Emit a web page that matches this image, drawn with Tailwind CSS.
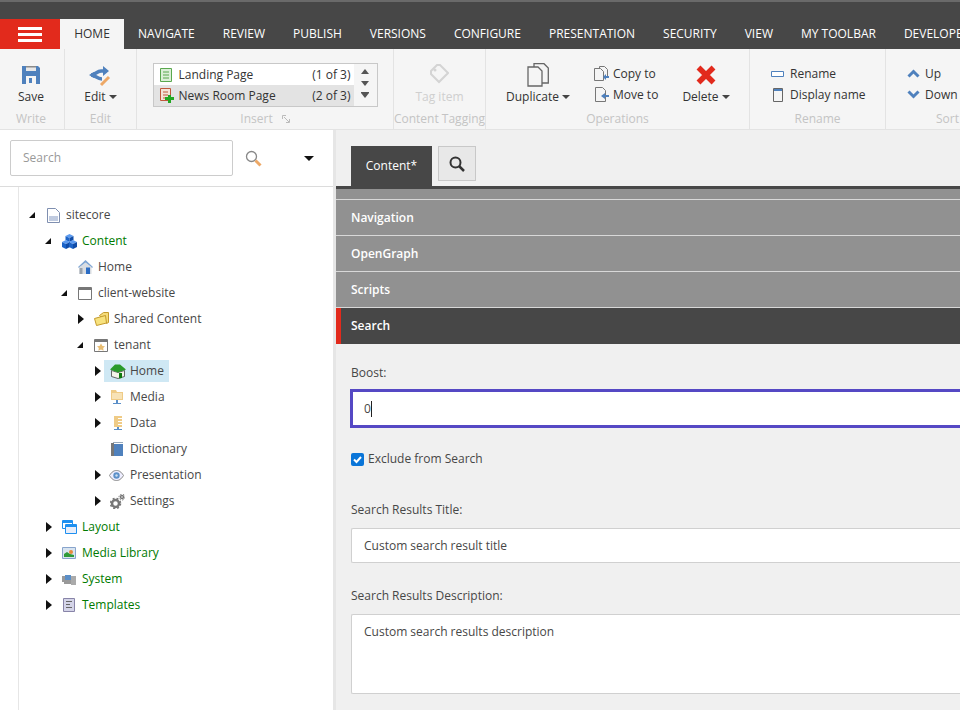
<!DOCTYPE html>
<html lang="en">
<head>
<meta charset="UTF-8">
<title>Content Editor</title>
<script src="https://cdn.jsdelivr.net/npm/@tailwindcss/browser@4"></script>
</head>
<body class="w-[960px] h-[710px] overflow-hidden bg-white font-['Open_Sans',sans-serif] text-[12px] text-[#333]">

<!-- top bar with tabs -->
<div class="h-[49px] bg-[#474747] border-t-2 border-[#6a6a6a] flex flex-col justify-end overflow-hidden">
  <div class="h-[30px] flex items-stretch whitespace-nowrap text-white">
    <div class="w-[60px] shrink-0 bg-[#e22a1c] flex flex-col items-center justify-center gap-[3px]">
      <span class="block w-[24px] h-[3px] bg-white"></span>
      <span class="block w-[24px] h-[3px] bg-white"></span>
      <span class="block w-[24px] h-[3px] bg-white"></span>
    </div>
    <div class="w-[64px] shrink-0 bg-[#f5f5f5] text-[#333] flex items-center justify-center">HOME</div>
    <div class="flex items-center pl-[14px] gap-[28px]">
      <span>NAVIGATE</span><span>REVIEW</span><span>PUBLISH</span><span>VERSIONS</span><span>CONFIGURE</span><span>PRESENTATION</span><span>SECURITY</span><span>VIEW</span><span>MY TOOLBAR</span><span>DEVELOPER</span>
    </div>
  </div>
</div>

<!-- ribbon -->
<div class="h-[81px] bg-[#f5f5f5] border-b border-[#e3e3e3] flex whitespace-nowrap">
  <div class="w-[65px] shrink-0 border-r border-[#e3e3e3] pr-[2px] flex flex-col items-center">
    <div class="h-[61px] flex flex-col items-center">
      <svg class="mt-[17px]" width="18" height="18" viewBox="0 0 18 18"><path fill="#4f81bd" d="M0 0h16l2 2v16H0z"/><path fill="#e8e8e8" d="M4 0h10v5H4z"/><path fill="#8a8a8a" d="M4 0h10v1.500H4z"/><path fill="#f5f5f5" d="M4 10h10v8H4z"/><path fill="#4f81bd" d="M7 12h3v5H7z"/></svg>
      <div class="mt-[4px] h-[18px] leading-[18px]">Save</div>
    </div>
    <div class="text-[#c4c4c4]">Write</div>
  </div>
  <div class="w-[72px] shrink-0 border-r border-[#e3e3e3] flex flex-col items-center">
    <div class="h-[61px] flex flex-col items-center">
      <svg class="mt-[17px]" width="22" height="21" viewBox="0 0 22 21"><path fill="none" stroke="#4f81bd" stroke-width="3.500" d="M2 9c4 0 6-4 10-4h5M2 9c4 0 6 4 11 4"/><path fill="#4f81bd" d="M14 0l6 5-6 5zM0 9l5-3v6z"/><path fill="none" stroke="#eda866" stroke-width="3" d="M12 19l8-8"/></svg>
      <div class="mt-[1px] h-[18px] leading-[18px] flex items-center gap-[3px]">Edit<span class="w-0 h-0 border-x-[4px] border-x-transparent border-t-[4px] border-t-[#444]"></span></div>
    </div>
    <div class="text-[#c4c4c4]">Edit</div>
  </div>
  <div class="w-[257px] shrink-0 border-r border-[#e3e3e3] flex flex-col items-center">
    <div class="h-[61px]">
      <div class="mt-[14px] w-[225px] h-[44px] border border-[#c8c8c8] bg-[#f5f5f5] flex">
        <div class="w-[200px]">
          <div class="h-[21px] bg-white flex items-center pl-[6px] pr-[3px]">
            <svg width="12" height="14" viewBox="0 0 12 14"><path fill="#dcefd8" stroke="#5aa84f" d="M.5.500h11v13H.5z"/><path stroke="#5aa84f" d="M3 4h6M3 7h6M3 10h6"/></svg>
            <span class="ml-[7px] grow">Landing Page</span><span>(1 of 3)</span>
          </div>
          <div class="h-[21px] bg-[#e3e3e3] flex items-center pl-[6px] pr-[3px]">
            <svg width="14" height="15" viewBox="0 0 14 15" class="mr-[-2px]"><path fill="#f4e4d8" stroke="#c0583c" d="M.5.500h10v12H.5z"/><path stroke="#c0583c" d="M3 4h5M3 7h5M3 10h3"/><path fill="#22a822" d="M8 7h3v2h3v3h-3v3H8v-3H5V9h3z"/></svg>
            <span class="ml-[7px] grow">News Room Page</span><span>(2 of 3)</span>
          </div>
        </div>
        <div class="grow flex flex-col items-center pt-[5px] gap-[7px]">
          <span class="w-0 h-0 border-x-[4px] border-x-transparent border-b-[5px] border-b-[#555]"></span>
          <span class="w-0 h-0 border-x-[4px] border-x-transparent border-t-[5px] border-t-[#555]"></span>
          <span class="w-[8px] border-t border-[#555] mt-[-1px] mb-[-7px]"></span>
          <span class="w-0 h-0 border-x-[4px] border-x-transparent border-t-[5px] border-t-[#555]"></span>
        </div>
      </div>
    </div>
    <div class="text-[#c4c4c4] flex items-center gap-[9px]">Insert
      <svg width="8" height="8" viewBox="0 0 8 8"><path fill="none" stroke="#bbb" d="M.5 4V.5H4M2 2l5 5M7.500 4v3.500H4"/></svg>
    </div>
  </div>
  <div class="w-[92px] shrink-0 border-r border-[#e3e3e3] flex flex-col items-center">
    <div class="h-[61px] flex flex-col items-center">
      <svg class="mt-[15px]" width="20" height="20" viewBox="0 0 20 20"><path fill="none" stroke="#d4d4d4" stroke-width="2" d="M2 7l6-6h3l8 8-9 9-8-8z"/><circle cx="6" cy="6" r="1.500" fill="#d4d4d4"/></svg>
      <div class="mt-[4px] h-[18px] leading-[18px] text-[#cfcfcf]">Tag item</div>
    </div>
    <div class="text-[#c4c4c4]">Content Tagging</div>
  </div>
  <div class="w-[264px] shrink-0 border-r border-[#e3e3e3] flex flex-col">
    <div class="h-[61px] flex">
      <div class="w-[104px] flex flex-col items-center">
        <svg class="mt-[14px]" width="22" height="24" viewBox="0 0 22 24"><path fill="#f5f5f5" stroke="#666" stroke-width="1.300" d="M7 .7h10l4.300 4.300v15H7z"/><path fill="#f5f5f5" stroke="#666" stroke-width="1.300" d="M1 4h10l4 4v15H1z"/></svg>
        <div class="mt-[1px] h-[18px] leading-[18px] flex items-center gap-[3px]">Duplicate<span class="w-0 h-0 border-x-[4px] border-x-transparent border-t-[4px] border-t-[#444]"></span></div>
      </div>
      <div class="w-[90px] pt-[14px] pl-[4px]">
        <div class="h-[21px] flex items-center gap-[4px]">
          <svg width="15" height="15" viewBox="0 0 15 15"><path fill="#f5f5f5" stroke="#777" d="M5.500.5h5l3 3v8h-8z"/><path fill="#f5f5f5" stroke="#777" d="M.5 2.500h6l3 3v9h-9z"/><path fill="#4f81bd" d="M9 11l3-3v2h3v2h-3v2z"/></svg>
          <span>Copy to</span>
        </div>
        <div class="h-[21px] flex items-center gap-[4px]">
          <svg width="15" height="15" viewBox="0 0 15 15"><path fill="#f5f5f5" stroke="#777" d="M1.500.5h7l3 3v11h-10z"/><path fill="#4f81bd" d="M7 9l4-3v2h4v2h-4v2z"/></svg>
          <span>Move to</span>
        </div>
      </div>
      <div class="w-[52px] flex flex-col items-center">
        <svg class="mt-[16px]" width="20" height="20" viewBox="0 0 20 20"><path fill="none" stroke="#e22a1c" stroke-width="5.500" d="M2.500 2.500l15 15M17.500 2.500l-15 15"/></svg>
        <div class="mt-[3px] h-[18px] leading-[18px] flex items-center gap-[3px]">Delete<span class="w-0 h-0 border-x-[4px] border-x-transparent border-t-[4px] border-t-[#444]"></span></div>
      </div>
    </div>
    <div class="text-center text-[#c4c4c4]">Operations</div>
  </div>
  <div class="w-[136px] shrink-0 border-r border-[#e3e3e3] flex flex-col">
    <div class="h-[61px] pt-[14px] pl-[21px]">
      <div class="h-[21px] flex items-center gap-[5px]">
        <svg width="14" height="14" viewBox="0 0 14 14"><path fill="#fff" stroke="#4f81bd" d="M.5 4.500h12v5H.5z"/></svg>
        <span>Rename</span>
      </div>
      <div class="h-[21px] flex items-center gap-[5px]">
        <svg width="14" height="14" viewBox="0 0 14 14"><path fill="#f5f5f5" stroke="#666" d="M2.500.5h9v13h-9z"/><path fill="#4f81bd" d="M3 1h8v2H3z"/></svg>
        <span>Display name</span>
      </div>
    </div>
    <div class="text-center text-[#c4c4c4]">Rename</div>
  </div>
  <div class="grow flex flex-col">
    <div class="h-[61px] pt-[14px] pl-[21px]">
      <div class="h-[21px] flex items-center gap-[5px]">
        <svg width="13" height="13" viewBox="0 0 13 13"><path fill="none" stroke="#4f81bd" stroke-width="3" d="M1.500 9.500l5-5 5 5"/></svg>
        <span>Up</span>
      </div>
      <div class="h-[21px] flex items-center gap-[5px]">
        <svg width="13" height="13" viewBox="0 0 13 13"><path fill="none" stroke="#4f81bd" stroke-width="3" d="M1.500 3.500l5 5 5-5"/></svg>
        <span>Down</span>
      </div>
    </div>
    <div class="pl-[50px] text-[#c4c4c4]">Sort</div>
  </div>
</div>

<div class="flex h-[580px]">
  <!-- tree panel -->
  <div class="w-[336px] shrink-0 bg-white border-r-[3px] border-[#e6e6e6] flex flex-col">
    <div class="h-[57px] shrink-0 border-b border-[#dcdcdc] flex items-center pl-[10px]">
      <div class="w-[223px] h-[36px] border border-[#ccc] rounded-[2px] flex items-center pl-[12px] text-[#999]">Search</div>
      <svg class="ml-[12px]" width="17" height="17" viewBox="0 0 17 17"><circle cx="6.500" cy="6.500" r="5" fill="none" stroke="#888" stroke-width="1.300"/><path stroke="#eda866" stroke-width="3" d="M10.500 10.500l5 5"/></svg>
      <span class="ml-[42px] w-0 h-0 border-x-[5px] border-x-transparent border-t-[5px] border-t-[#111]"></span>
    </div>
    <div class="grow ml-[18px] border-l border-[#e6e6e6] pt-[15px] text-[#474747]">
      <div class="h-[26px] flex items-center pl-[10px]">
        <svg width="7" height="7" viewBox="0 0 7 7" class="mr-[11px]"><path d="M6 0v6H0z" fill="#111"/></svg>
        <svg width="13" height="15" viewBox="0 0 13 15"><path fill="#fff" stroke="#7f8fb0" d="M.5.500h8l4 4v10H.5z"/><path fill="#c0cbe0" d="M2 8h9v5H2z"/></svg>
        <span class="ml-[6px]">sitecore</span>
      </div>
      <div class="h-[26px] flex items-center pl-[26px] text-[#007a00]">
        <svg width="7" height="7" viewBox="0 0 7 7" class="mr-[10px]"><path d="M6 0v6H0z" fill="#111"/></svg>
        <svg width="15" height="15" viewBox="0 0 15 15"><path fill="#5b9af0" d="M7.500 0l4 2-4 2-4-2z"/><path fill="#1c64c8" d="M3.500 2l4 2v4l-4-2z"/><path fill="#0f4ca8" d="M11.500 2l-4 2v4l4-2z"/><path fill="#5b9af0" d="M4 6l4 2-4 2-4-2z"/><path fill="#1c64c8" d="M0 8l4 2v5l-4-2z"/><path fill="#0f4ca8" d="M8 8l-4 2v5l4-2z"/><path fill="#5b9af0" d="M11 6l4 2-4 2-4-2z"/><path fill="#1c64c8" d="M7 8l4 2v5l-4-2z"/><path fill="#0f4ca8" d="M15 8l-4 2v5l4-2z"/></svg>
        <span class="ml-[5px]">Content</span>
      </div>
      <div class="h-[26px] flex items-center pl-[59px]">
        <svg width="15" height="14" viewBox="0 0 15 14"><path fill="#7fa6d4" d="M7.500 0L15 7l-1 1-6.500-5L1 8 0 7z"/><path fill="#d9dde2" d="M1.500 7l6-4.500 6 4.500v7h-12z"/><path fill="#9aa3ad" d="M1.500 8h3v6h-3z"/><path fill="#2b6cc4" d="M8 7.500h4V14H8z"/></svg>
        <span class="ml-[5px]">Home</span>
      </div>
      <div class="h-[26px] flex items-center pl-[42px]">
        <svg width="7" height="7" viewBox="0 0 7 7" class="mr-[10px]"><path d="M6 0v6H0z" fill="#111"/></svg>
        <svg width="14" height="13" viewBox="0 0 14 13"><path fill="#fff" stroke="#777" d="M.5.500h13v12H.5z"/><path fill="#777" d="M1 1h12v2H1z"/></svg>
        <span class="ml-[6px]">client-website</span>
      </div>
      <div class="h-[26px] flex items-center pl-[59px]">
        <svg width="6" height="10" viewBox="0 0 6 10" class="mr-[10px]"><path d="M0 0l6 5-6 5z" fill="#111"/></svg>
        <svg width="15" height="14" viewBox="0 0 15 14"><path fill="#f5dc7a" stroke="#c49a2c" d="M5.500 3.500l4-3h5v10l-2 1z"/><path fill="#f7e27e" stroke="#c49a2c" d="M.5 6.500l11-3 1 7.500-10 2.500z"/></svg>
        <span class="ml-[5px]">Shared Content</span>
      </div>
      <div class="h-[26px] flex items-center pl-[58px]">
        <svg width="7" height="7" viewBox="0 0 7 7" class="mr-[10px]"><path d="M6 0v6H0z" fill="#111"/></svg>
        <svg width="14" height="13" viewBox="0 0 14 13"><path fill="#fff" stroke="#777" d="M.5.500h13v12H.5z"/><path fill="#777" d="M1 1h12v2H1z"/><path fill="#e8bd72" d="M7 4.500l1.500 2.500 2.500.3-1.800 1.800.4 2.600L7 10.500l-2.600 1.200.4-2.600L3 7.300l2.500-.3z"/></svg>
        <span class="ml-[6px]">tenant</span>
      </div>
      <div class="h-[26px] flex items-center pl-[76px]">
        <svg width="6" height="10" viewBox="0 0 6 10" class="mr-[3px]"><path d="M0 0l6 5-6 5z" fill="#111"/></svg>
        <div class="h-[22px] w-[65px] bg-[#cfe8f4] flex items-center pl-[6px]">
          <svg width="16" height="15" viewBox="0 0 16 15"><path fill="#f4f4ea" stroke="#444" stroke-width=".8" d="M1.500 6.500l6.500 2 6.500-2v6L8 14.500l-6.500-2z"/><path fill="#2a9a2a" d="M5 .5h5l6 5-8 3-8-3z"/><path fill="#0f7a0f" d="M9 9h3v5l-3 .5z"/></svg>
          <span class="ml-[4px]">Home</span>
        </div>
      </div>
      <div class="h-[26px] flex items-center pl-[76px]">
        <svg width="6" height="10" viewBox="0 0 6 10" class="mr-[10px]"><path d="M0 0l6 5-6 5z" fill="#111"/></svg>
        <svg width="12" height="15" viewBox="0 0 12 15"><path fill="#efcb86" d="M0 0h5l1 2h6v8H0z"/><path fill="#f7e2b6" d="M1 3h10v6H1z"/><path fill="#5b8fc8" d="M5 10h2v3h3v1H2v-1h3z"/></svg>
        <span class="ml-[7px]">Media</span>
      </div>
      <div class="h-[26px] flex items-center pl-[76px]">
        <svg width="6" height="10" viewBox="0 0 6 10" class="mr-[12px]"><path d="M0 0l6 5-6 5z" fill="#111"/></svg>
        <svg width="10" height="15" viewBox="0 0 10 15"><path fill="#efcb86" d="M1 0h8v11H1z"/><path fill="#fff" d="M5 2h4v1H5zM5 5h4v1H5zM5 8h4v1H5z"/><path fill="#5b8fc8" d="M4 11h2v2h3v1H1v-1h3z"/></svg>
        <span class="ml-[7px]">Data</span>
      </div>
      <div class="h-[26px] flex items-center pl-[92px]">
        <svg width="12" height="14" viewBox="0 0 12 14"><path fill="#777" d="M0 1h3v13H0z"/><path fill="#4f81bd" d="M3 2h9v12H3z"/><path fill="#9ab" d="M2 0h10v1H2z"/></svg>
        <span class="ml-[7px]">Dictionary</span>
      </div>
      <div class="h-[26px] flex items-center pl-[76px]">
        <svg width="6" height="10" viewBox="0 0 6 10" class="mr-[8px]"><path d="M0 0l6 5-6 5z" fill="#111"/></svg>
        <svg width="15" height="11" viewBox="0 0 15 11"><path fill="#eef" stroke="#888" d="M.5 5.500C3 1.500 5 .5 7.500.5s4.500 1 7 5c-2.500 4-4.500 5-7 5s-4.500-1-7-5z"/><circle cx="7.500" cy="5.500" r="3.200" fill="#5b8fc8"/><circle cx="7.500" cy="5.500" r="1.200" fill="#cde"/></svg>
        <span class="ml-[6px]">Presentation</span>
      </div>
      <div class="h-[26px] flex items-center pl-[76px]">
        <svg width="6" height="10" viewBox="0 0 6 10" class="mr-[9px]"><path d="M0 0l6 5-6 5z" fill="#111"/></svg>
        <svg width="15" height="15" viewBox="0 0 15 15"><circle cx="5.500" cy="9.500" r="3.500" fill="none" stroke="#777" stroke-width="2.500"/><circle cx="5.500" cy="9.500" r="5" fill="none" stroke="#777" stroke-width="1.500" stroke-dasharray="2 2"/><circle cx="12" cy="3" r="1.500" fill="none" stroke="#777" stroke-width="1.500"/><circle cx="12" cy="3" r="3" fill="none" stroke="#777" stroke-width="1" stroke-dasharray="1.500 1.500"/></svg>
        <span class="ml-[5px]">Settings</span>
      </div>
      <div class="h-[26px] flex items-center pl-[27px] text-[#007a00]">
        <svg width="6" height="10" viewBox="0 0 6 10" class="mr-[10px]"><path d="M0 0l6 5-6 5z" fill="#111"/></svg>
        <svg width="15" height="14" viewBox="0 0 15 14"><path fill="#fff" stroke="#1e90f0" d="M.5.500h10v8H.5z"/><path fill="#1e90f0" d="M1 1h9v2H1z"/><path fill="#e8eefa" stroke="#1e90f0" d="M3.500 4.500h11v9h-11z"/><path fill="#1e90f0" d="M4 5h10v2H4z"/></svg>
        <span class="ml-[5px]">Layout</span>
      </div>
      <div class="h-[26px] flex items-center pl-[27px] text-[#007a00]">
        <svg width="6" height="10" viewBox="0 0 6 10" class="mr-[10px]"><path d="M0 0l6 5-6 5z" fill="#111"/></svg>
        <svg width="14" height="12" viewBox="0 0 14 12"><path fill="#d8e4f0" stroke="#88a4cc" d="M.5.500h13v11H.5z"/><path fill="#2f9a3a" d="M2 10V7l3-2 3 2 4 1v2z"/><circle cx="9" cy="5" r="2" fill="#e88a3a"/></svg>
        <span class="ml-[6px]">Media Library</span>
      </div>
      <div class="h-[26px] flex items-center pl-[27px] text-[#007a00]">
        <svg width="6" height="10" viewBox="0 0 6 10" class="mr-[10px]"><path d="M0 0l6 5-6 5z" fill="#111"/></svg>
        <svg width="14" height="11" viewBox="0 0 14 11"><path fill="#aaa" d="M9 2h5v9H9z"/><path fill="#999" d="M0 2h9v6H0zM2 8h7v2H2z"/><path fill="#5b8fc8" d="M3 1h6v5H3z"/></svg>
        <span class="ml-[6px]">System</span>
      </div>
      <div class="h-[26px] flex items-center pl-[27px] text-[#007a00]">
        <svg width="6" height="10" viewBox="0 0 6 10" class="mr-[11px]"><path d="M0 0l6 5-6 5z" fill="#111"/></svg>
        <svg width="12" height="14" viewBox="0 0 12 14"><path fill="#d4d4e8" stroke="#8884a8" d="M.5.500h11v13H.5z"/><path stroke="#666" d="M3 3.500h6M3 6.500h4M3 9.500h6"/></svg>
        <span class="ml-[7px]">Templates</span>
      </div>
    </div>
  </div>

  <!-- content editor -->
  <div class="grow bg-[#f0f0f0] overflow-hidden">
    <div class="h-[56px] pl-[15px] pt-[16px] flex items-start">
      <div class="w-[81px] h-[40px] bg-[#474747] text-white text-[12px] flex items-center justify-center">Content*</div>
      <div class="ml-[6px] w-[38px] h-[35px] border border-[#c8c8c8] bg-[#e8e8e8] flex items-center justify-center">
        <svg width="16" height="16" viewBox="0 0 16 16"><circle cx="6.500" cy="6.500" r="5" fill="none" stroke="#333" stroke-width="2"/><path stroke="#333" stroke-width="2.500" d="M10 10l5 5"/></svg>
      </div>
    </div>
    <div class="h-[3px] bg-[#474747]"></div>
    <div class="h-[11px] bg-[#919191] border-b border-[#d8d8d8]"></div>
    <div class="h-[36px] bg-[#919191] border-b border-[#d8d8d8] pl-[15px] flex items-center text-white font-semibold">Navigation</div>
    <div class="h-[36px] bg-[#919191] border-b border-[#d8d8d8] pl-[15px] flex items-center text-white font-semibold">OpenGraph</div>
    <div class="h-[36px] bg-[#919191] border-b border-[#d8d8d8] pl-[15px] flex items-center text-white font-semibold">Scripts</div>
    <div class="h-[36px] bg-[#474747] border-l-[5px] border-[#e22a1c] pl-[10px] flex items-center text-white font-semibold">Search</div>

    <div class="pl-[15px] text-[#474747]">
      <div class="mt-[20px] h-[18px] leading-[18px]">Boost:</div>
      <div class="mt-[7px] ml-[-1px] h-[39px] border-[3px] border-r-0 border-[#5548c4] bg-white flex items-center pl-[11px]">0<span class="w-px h-[16px] bg-[#222]"></span></div>
      <div class="mt-[22px] h-[18px] flex items-center">
        <svg width="13" height="13" viewBox="0 0 13 13"><rect width="13" height="13" rx="2" fill="#0a75d8"/><path fill="none" stroke="#fff" stroke-width="2" d="M3 6.500l2.500 2.500 4.500-5"/></svg>
        <span class="ml-[4px]">Exclude from Search</span>
      </div>
      <div class="mt-[33px] h-[18px] leading-[18px]">Search Results Title:</div>
      <div class="mt-[9px] h-[35px] border border-r-0 border-[#d0d0d0] rounded-l-[2px] bg-white flex items-center pl-[12px]">Custom search result title</div>
      <div class="mt-[24px] h-[18px] leading-[18px]">Search Results Description:</div>
      <div class="mt-[9px] h-[80px] border border-r-0 border-[#d0d0d0] rounded-l-[2px] bg-white pl-[12px] pt-[8px]">Custom search results description</div>
    </div>
  </div>
</div>

</body>
</html>
